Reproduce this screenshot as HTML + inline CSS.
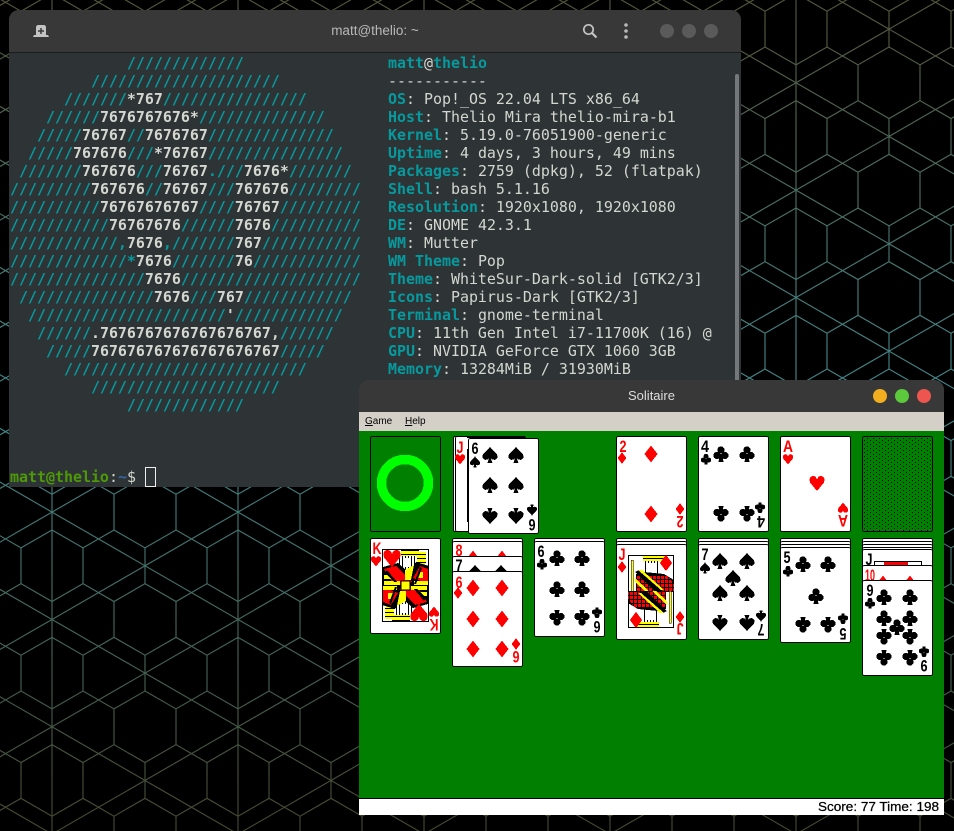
<!DOCTYPE html>
<html><head><meta charset="utf-8"><title>Desktop</title>
<style>
html,body{margin:0;padding:0;background:#000;width:954px;height:831px;overflow:hidden}
.abs{position:absolute}
#term{left:9px;top:10px;width:732px;height:477px;background:#2e3436;border-radius:10px 10px 0 0;overflow:hidden}
#thead{left:0;top:0;width:732px;height:42px;background:#383838;border-bottom:1px solid #1c1c1c}
#ttitle{left:0;top:13px;width:732px;text-align:center;font:13.5px/16px "Liberation Sans",sans-serif;color:#b8b8b8}
pre{margin:0;font-family:"DejaVu Sans Mono",monospace;font-size:14.95px;line-height:18px;color:#d3d7cf}
#logo{left:1px;top:44px;color:#069a9e;font-weight:bold}
#logo i{font-style:normal;color:#d3d7cf}
#info{left:379px;top:44px}
#info b{color:#069a9e}
#prompt{left:1px;top:458px}
#prompt b{color:#4e9a06}
#prompt em{font-style:normal;font-weight:bold;color:#3465a4}
#cursor{left:136px;top:457px;width:9px;height:18px;border:1px solid #eee}
#sb{left:726px;top:64px;width:4px;height:414px;background:#74787a;border-radius:2px}
#sol{left:359px;top:380px;width:585px;height:435px;overflow:hidden;border-radius:10px 10px 0 0;background:#383838}
#shead{left:0;top:0;width:585px;height:32px;background:#383838;color:#ddd;text-align:center;font:13px/32px "Liberation Sans",sans-serif}
#menu{left:0;top:32px;width:585px;height:19px;background:#d4d0c8;font:10px/20px "Liberation Sans",sans-serif;color:#000}
#table{left:0;top:51px;width:585px;height:367px;background:#007f00}
#status{left:0;top:418px;width:585px;height:17px;background:#fff;border-top:1px solid #000;box-sizing:border-box}
svg.full{position:absolute;left:0;top:0}
.r{font:bold 17px "Liberation Sans",sans-serif;fill:#f00;text-anchor:middle}
.k{font:bold 17px "Liberation Sans",sans-serif;fill:#000;text-anchor:middle}
</style></head><body>

<svg class="full" width="954" height="831" viewBox="0 0 954 831">
<defs>
<linearGradient id="lg" gradientUnits="userSpaceOnUse" x1="0" y1="0" x2="0" y2="831">
<stop offset="0" stop-color="#54553a"/><stop offset=".48" stop-color="#428a8e"/><stop offset="1" stop-color="#45462e"/>
</linearGradient>
<g id="tile" fill="none" stroke="#fff" stroke-width="1.150">
<path d="M0 0L31 17.89L62 0L93 17.89L124 0L155 17.89L186 0"/>
<path d="M0 71.56L31 53.67L62 71.56L93 53.67L124 71.56L155 53.67L186 71.56"/>
<path d="M31 17.89V53.67M93 17.89V53.67M155 17.89V53.67M62 71.56V107.33M124 71.56V107.33"/>
<path d="M0 0V107.33"/>
<path d="M0 89.44L31 107.33M31 0L186 89.44M0 89.44L155 0M155 107.33L186 89.44"/>
</g>
<g id="trow"><use href="#tile" x="-134"/><use href="#tile" x="52"/><use href="#tile" x="238"/><use href="#tile" x="424"/><use href="#tile" x="610"/><use href="#tile" x="796"/></g>
<mask id="hexm" maskUnits="userSpaceOnUse" x="0" y="0" width="954" height="831">
<use href="#trow" y="-114"/><use href="#trow" y="-6.67"/><use href="#trow" y="100.66"/><use href="#trow" y="208"/><use href="#trow" y="315.33"/><use href="#trow" y="422.66"/><use href="#trow" y="530"/><use href="#trow" y="637.33"/><use href="#trow" y="744.66"/>
</mask>
</defs>
<rect width="954" height="831" fill="url(#lg)" mask="url(#hexm)"/>
</svg>

<div id="term" class="abs">
<div id="thead" class="abs"></div>
<div id="ttitle" class="abs">matt@thelio: ~</div>
<svg class="abs" style="left:0;top:0" width="732" height="42" viewBox="9 10 732 42">
<path fill="#c4c4c4" d="M36 35V27.500Q36 25 38.500 25H43.500Q46 25 46 27.500V35H48L49 37H33L34 35Z"/>
<path fill="#383838" d="M40.250 28h1.500v2.250h2.250v1.500h-2.250v2.250h-1.500v-2.250h-2.250v-1.500h2.250z"/>
<circle cx="588.500" cy="29.500" r="4.700" fill="none" stroke="#c4c4c4" stroke-width="1.700"/>
<path d="M592 33L596.500 37.500" stroke="#c4c4c4" stroke-width="2.200" fill="none"/>
<circle cx="626" cy="25" r="1.800" fill="#b8b8b8"/><circle cx="626" cy="31" r="1.800" fill="#b8b8b8"/><circle cx="626" cy="37" r="1.800" fill="#b8b8b8"/>
<circle cx="667" cy="31" r="7" fill="#5a5a5a"/><circle cx="689" cy="31" r="7" fill="#5a5a5a"/><circle cx="711" cy="31" r="7" fill="#5a5a5a"/>
</svg>
<pre id="logo" class="abs">             /////////////
         /////////////////////
      ///////<i>*767</i>////////////////
    //////<i>7676767676*</i>//////////////
   /////<i>76767</i>//<i>7676767</i>//////////////
  /////<i>767676</i>///<i>*76767</i>///////////////
 ///////<i>767676</i>///<i>76767</i>.///<i>7676*</i>///////
/////////<i>767676</i>//<i>76767</i>///<i>767676</i>////////
//////////<i>76767676767</i>////<i>76767</i>/////////
///////////<i>76767676</i>//////<i>7676</i>//////////
////////////,<i>7676</i>,///////<i>767</i>///////////
/////////////*<i>7676</i>///////<i>76</i>////////////
///////////////<i>7676</i>////////////////////
 ///////////////<i>7676</i>///<i>767</i>////////////
  //////////////////////<i>'</i>////////////
   //////<i>.7676767676767676767,</i>//////
    /////<i>767676767676767676767</i>/////
      ///////////////////////////
         /////////////////////
             /////////////</pre>
<pre id="info" class="abs"><b>matt</b>@<b>thelio</b>
-----------
<b>OS</b>: Pop!_OS 22.04 LTS x86_64
<b>Host</b>: Thelio Mira thelio-mira-b1
<b>Kernel</b>: 5.19.0-76051900-generic
<b>Uptime</b>: 4 days, 3 hours, 49 mins
<b>Packages</b>: 2759 (dpkg), 52 (flatpak)
<b>Shell</b>: bash 5.1.16
<b>Resolution</b>: 1920x1080, 1920x1080
<b>DE</b>: GNOME 42.3.1
<b>WM</b>: Mutter
<b>WM Theme</b>: Pop
<b>Theme</b>: WhiteSur-Dark-solid [GTK2/3]
<b>Icons</b>: Papirus-Dark [GTK2/3]
<b>Terminal</b>: gnome-terminal
<b>CPU</b>: 11th Gen Intel i7-11700K (16) @
<b>GPU</b>: NVIDIA GeForce GTX 1060 3GB
<b>Memory</b>: 13284MiB / 31930MiB</pre>
<pre id="prompt" class="abs"><b>matt@thelio</b>:<em>~</em>$ </pre>
<div id="cursor" class="abs"></div>
<div id="sb" class="abs"></div>
</div>

<div id="sol" class="abs">
<div id="shead" class="abs">Solitaire</div>
<svg class="abs" style="left:0;top:0" width="585" height="32" viewBox="359 380 585 32">
<circle cx="880" cy="396" r="7" fill="#f2ae1e"/><circle cx="902" cy="396" r="7" fill="#5cc83b"/><circle cx="924" cy="396" r="7" fill="#ec5550"/>
</svg>
<div id="menu" class="abs"><span class="abs" style="left:6px;top:0"><u>G</u>ame</span><span class="abs" style="left:46px;top:0"><u>H</u>elp</span></div>
<div id="table" class="abs"></div>
<div id="status" class="abs"></div>
</div>

<svg class="full" width="954" height="831" viewBox="0 0 954 831" style="shape-rendering:crispEdges">
<defs>
<path id="ps" fill="#000" d="M0-8.500C2-4 8-2 7.500 2C7 5.500 3 5.500 1 3.500L2.500 8H-2.500L-1 3.500C-3 5.500-7 5.500-7.500 2C-8-2-2-4 0-8.500Z"/>
<g id="pc" fill="#000"><circle cx="0" cy="-4" r="3.600"/><circle cx="-4" cy="1.500" r="3.600"/><circle cx="4" cy="1.500" r="3.600"/><path d="M-1 0h2l1.500 8h-5z"/></g>
<path id="ph" fill="#f00" d="M0 8L-7-.5Q-8.500-6.500-4-7Q-1-7 0-3.500Q1-7 4-7Q8.500-6.500 7-.5Z"/>
<path id="pd" fill="#f00" d="M0-8.500L6.500 0L0 8.500L-6.500 0Z"/>
<g id="ips"><use href="#ps" transform="rotate(180)"/></g>
<g id="ipc"><use href="#pc" transform="rotate(180)"/></g>
<g id="ipd"><use href="#pd" transform="rotate(180)"/></g>
<g id="iph"><use href="#ph" transform="rotate(180)"/></g>
<g id="ss"><use href="#ps" transform="scale(.68)"/></g>
<g id="sc"><use href="#pc" transform="scale(.68)"/></g>
<g id="sh"><use href="#ph" transform="scale(.68)"/></g>
<g id="sd"><use href="#pd" transform="scale(.68)"/></g>
<g id="iss"><use href="#ps" transform="rotate(180) scale(.68)"/></g>
<g id="isc"><use href="#pc" transform="rotate(180) scale(.68)"/></g>
<g id="ish"><use href="#ph" transform="rotate(180) scale(.68)"/></g>
<g id="isd"><use href="#pd" transform="rotate(180) scale(.68)"/></g>
<rect id="C" x=".5" y=".5" width="70" height="95" rx="2" fill="#fff" stroke="#000"/>
<pattern id="dots" width="6" height="4" patternUnits="userSpaceOnUse"><rect width="6" height="4" fill="#007f00"/><rect width="1" height="1" fill="#000"/><rect x="3" y="2" width="1" height="1" fill="#000"/></pattern>
<pattern id="rb" width="4" height="4" patternUnits="userSpaceOnUse"><rect width="4" height="4" fill="#f00"/><rect width="1" height="4" fill="#000"/><rect y="3" width="4" height="1" fill="#000"/></pattern>
<pattern id="wb" width="3" height="2" patternUnits="userSpaceOnUse"><rect width="3" height="2" fill="#fff"/><rect width="1" height="2" fill="#000"/></pattern>
<pattern id="yb" width="2" height="4" patternUnits="userSpaceOnUse"><rect width="2" height="4" fill="#ff0"/><rect y="2" width="2" height="1" fill="#000"/></pattern>
<g id="Khalf">
<rect x="401" y="550" width="18" height="6" fill="url(#yb)"/>
<rect x="399" y="556" width="16" height="14" fill="url(#wb)"/>
<rect x="403" y="558" width="8" height="9" fill="#fff"/>
<rect x="417" y="552" width="9" height="12" fill="url(#yb)"/>
<path fill="#000" d="M383 567L398 563L408 572L416 562L429 566V586H383Z"/>
<path fill="#f00" d="M384 569L396 566L412 582L404 585H394ZM420 566L428 569V584L413 578Z"/>
<path fill="#ff0" d="M384 575h8v4h-8zM384 581h16v4h-16zM418 572h5v6h-5zM414 581h14v4h-14zM405 570L414 565L411 580H405Z"/>
<path fill="#000" d="M387 570l10 12h-3l-9-9zM422 568l-6 16h-2l6-17z"/>
<rect x="401" y="581" width="9" height="9" fill="#ff0" stroke="#000"/>
<use href="#ph" transform="translate(392 558) scale(1.150)"/>
</g>
<g id="Jhalf">
<rect x="643" y="556" width="22" height="5" fill="url(#yb)"/>
<rect x="645" y="561" width="15" height="14" fill="url(#wb)"/>
<rect x="648" y="563" width="9" height="10" fill="#fff"/>
<rect x="631" y="560" width="2" height="32" fill="#ff0" stroke="#000" stroke-width=".5"/>
<path fill="#000" d="M636 574L644 572L664 574L674 580V592H636Z"/>
<path fill="url(#rb)" d="M637 576H668L674 584V592H637Z"/>
<path fill="#000" d="M635 572L639 570L664 592H656Z"/>
<path fill="#ff0" d="M638 570L642 570L664 590H661ZM635 578L650 592H646L635 582Z"/>
<use href="#pd" transform="translate(666 563) scale(.95)"/>
</g>
</defs>

<!-- empty stock slot -->
<rect x="370.500" y="436.500" width="70" height="95" rx="2" fill="none" stroke="#000"/>
<circle cx="405" cy="483" r="23.500" fill="none" stroke="#0f0" stroke-width="9.500"/>

<!-- waste -->
<use href="#C" x="453" y="436"/>
<use href="#C" x="455" y="436"/>
<text class="r" textLength="7" lengthAdjust="spacingAndGlyphs" x="460" y="453">J</text>
<use href="#sh" x="460" y="459"/>
<rect x="467" y="449" width="2" height="73" fill="#000"/>
<rect x="468" y="452" width="1" height="18" fill="#f00"/>
<rect x="468" y="475" width="1" height="6" fill="#ff0"/>
<rect x="467" y="436" width="58" height="2" fill="#000"/>
<use href="#C" x="468" y="438"/>
<text class="k" textLength="7" lengthAdjust="spacingAndGlyphs" x="475" y="454">6</text>
<use href="#ss" x="475" y="462"/>
<use href="#ps" x="490" y="455"/><use href="#ps" x="516" y="455"/>
<use href="#ps" x="490" y="485"/><use href="#ps" x="516" y="485"/>
<use href="#ips" x="490" y="516"/><use href="#ips" x="516" y="516"/>
<use href="#iss" x="532" y="510"/>
<text class="k" textLength="7" lengthAdjust="spacingAndGlyphs" transform="rotate(180 532 525)" x="532" y="531">6</text>

<!-- 2 diamonds -->
<use href="#C" x="616" y="436"/>
<text class="r" textLength="7" lengthAdjust="spacingAndGlyphs" x="623" y="452">2</text>
<use href="#sd" x="622" y="458"/>
<use href="#pd" x="651" y="454"/><use href="#ipd" x="651" y="514"/>
<use href="#isd" x="680" y="509"/>
<text class="r" textLength="7" lengthAdjust="spacingAndGlyphs" transform="rotate(180 680 522)" x="680" y="528">2</text>

<!-- 4 clubs -->
<use href="#C" x="698" y="436"/>
<text class="k" textLength="8" lengthAdjust="spacingAndGlyphs" x="705" y="452">4</text>
<use href="#sc" x="706" y="459"/>
<use href="#pc" x="721" y="454"/><use href="#pc" x="747" y="454"/>
<use href="#ipc" x="721" y="514"/><use href="#ipc" x="747" y="514"/>
<use href="#isc" x="760" y="508"/>
<text class="k" textLength="8" lengthAdjust="spacingAndGlyphs" transform="rotate(180 761 522)" x="761" y="528">4</text>

<!-- A hearts -->
<use href="#C" x="780" y="436"/>
<text class="r" textLength="10" lengthAdjust="spacingAndGlyphs" x="788" y="452">A</text>
<use href="#sh" x="788" y="459"/>
<use href="#ph" x="817" y="483"/>
<use href="#ish" x="843" y="508"/>
<text class="r" textLength="10" lengthAdjust="spacingAndGlyphs" transform="rotate(180 843 521)" x="843" y="527">A</text>

<!-- card back -->
<rect x="862.500" y="436.500" width="70" height="95" rx="2" fill="url(#dots)" stroke="#000"/>

<!-- K hearts -->
<use href="#C" x="370" y="538"/>
<rect x="382.500" y="549.500" width="46" height="72" fill="#fff" stroke="#000"/>
<use href="#Khalf"/>
<use href="#Khalf" transform="rotate(180 405.500 585.500)"/>
<text class="r" textLength="9" lengthAdjust="spacingAndGlyphs" x="377" y="554">K</text>
<use href="#sh" x="376" y="561"/>
<use href="#ish" x="434" y="612"/>
<text class="r" textLength="9" lengthAdjust="spacingAndGlyphs" transform="rotate(180 434 625)" x="434" y="631">K</text>

<!-- column 2 -->
<use href="#C" x="452" y="538"/>
<use href="#C" x="452" y="541"/>
<text class="r" textLength="7" lengthAdjust="spacingAndGlyphs" x="459" y="556">8</text>
<use href="#pd" x="473" y="559"/><use href="#pd" x="502" y="559"/>
<use href="#C" x="452" y="556"/>
<text class="k" textLength="7" lengthAdjust="spacingAndGlyphs" x="459" y="571">7</text>
<use href="#ps" x="475" y="573"/><use href="#ps" x="501" y="573"/>
<use href="#C" x="452" y="571"/>
<text class="r" textLength="7" lengthAdjust="spacingAndGlyphs" x="459" y="588">6</text>
<use href="#sd" x="458" y="593"/>
<use href="#pd" x="473" y="588"/><use href="#pd" x="502" y="588"/>
<use href="#pd" x="473" y="619"/><use href="#pd" x="502" y="619"/>
<use href="#ipd" x="473" y="649"/><use href="#ipd" x="502" y="649"/>
<use href="#isd" x="516" y="644"/>
<text class="r" textLength="7" lengthAdjust="spacingAndGlyphs" transform="rotate(180 516 657)" x="516" y="663">6</text>

<!-- column 3 -->
<use href="#C" x="534" y="538"/>
<use href="#C" x="534" y="541"/>
<text class="k" textLength="7" lengthAdjust="spacingAndGlyphs" x="541" y="557">6</text>
<use href="#sc" x="542" y="564"/>
<use href="#pc" x="557" y="558"/><use href="#pc" x="582" y="558"/>
<use href="#pc" x="557" y="589"/><use href="#pc" x="582" y="589"/>
<use href="#ipc" x="557" y="618"/><use href="#ipc" x="582" y="618"/>
<use href="#isc" x="597" y="613"/>
<text class="k" textLength="7" lengthAdjust="spacingAndGlyphs" transform="rotate(180 597 627)" x="597" y="633">6</text>

<!-- J diamonds -->
<use href="#C" x="616" y="538"/>
<use href="#C" x="616" y="541"/>
<use href="#C" x="616" y="544"/>
<rect x="628.500" y="555.500" width="45" height="72" fill="#fff" stroke="#000"/>
<use href="#Jhalf"/>
<use href="#Jhalf" transform="rotate(180 651 591.500)"/>
<text class="r" textLength="7" lengthAdjust="spacingAndGlyphs" x="622" y="560">J</text>
<use href="#sd" x="622" y="567"/>
<use href="#isd" x="680" y="617"/>
<text class="r" textLength="7" lengthAdjust="spacingAndGlyphs" transform="rotate(180 680 629)" x="680" y="635">J</text>

<!-- 7 spades -->
<use href="#C" x="698" y="538"/>
<use href="#C" x="698" y="541"/>
<use href="#C" x="698" y="544"/>
<text class="k" textLength="7" lengthAdjust="spacingAndGlyphs" x="705" y="560">7</text>
<use href="#ss" x="705" y="568"/>
<use href="#ps" x="720" y="561"/><use href="#ps" x="747" y="561"/>
<use href="#ps" x="733" y="578"/>
<use href="#ps" x="720" y="593"/><use href="#ps" x="747" y="593"/>
<use href="#ips" x="720" y="623"/><use href="#ips" x="747" y="623"/>
<use href="#iss" x="761" y="616"/>
<text class="k" textLength="7" lengthAdjust="spacingAndGlyphs" transform="rotate(180 761 630)" x="761" y="636">7</text>

<!-- 5 clubs -->
<use href="#C" x="780" y="538"/>
<use href="#C" x="780" y="541"/>
<use href="#C" x="780" y="544"/>
<use href="#C" x="780" y="547"/>
<text class="k" textLength="7" lengthAdjust="spacingAndGlyphs" x="787" y="563">5</text>
<use href="#sc" x="788" y="571"/>
<use href="#pc" x="803" y="564"/><use href="#pc" x="828" y="564"/>
<use href="#pc" x="816" y="596"/>
<use href="#ipc" x="803" y="625"/><use href="#ipc" x="828" y="625"/>
<use href="#isc" x="843" y="619"/>
<text class="k" textLength="7" lengthAdjust="spacingAndGlyphs" transform="rotate(180 843 634)" x="843" y="640">5</text>

<!-- column 7 -->
<use href="#C" x="862" y="538"/>
<use href="#C" x="862" y="541"/>
<use href="#C" x="862" y="544"/>
<use href="#C" x="862" y="547"/>
<use href="#C" x="862" y="549"/>
<text class="k" textLength="7" lengthAdjust="spacingAndGlyphs" x="869" y="565">J</text>
<rect x="874.500" y="561.500" width="47" height="30" fill="#fff" stroke="#000"/>
<rect x="884" y="562" width="24" height="3" fill="#f00"/>
<use href="#C" x="862" y="565"/>
<text class="r" textLength="10" lengthAdjust="spacingAndGlyphs" x="870" y="581">10</text>
<use href="#pd" x="883" y="584"/><use href="#pd" x="910" y="584"/>
<use href="#C" x="862" y="580"/>
<text class="k" textLength="7" lengthAdjust="spacingAndGlyphs" x="870" y="596">9</text>
<use href="#sc" x="870" y="603"/>
<use href="#pc" x="884" y="597"/><use href="#pc" x="910" y="597"/>
<use href="#pc" x="884" y="618"/><use href="#pc" x="910" y="618"/>
<use href="#pc" x="897" y="627"/>
<use href="#ipc" x="884" y="637"/><use href="#ipc" x="910" y="637"/>
<use href="#ipc" x="884" y="658"/><use href="#ipc" x="910" y="658"/>
<use href="#isc" x="924" y="652"/>
<text class="k" textLength="7" lengthAdjust="spacingAndGlyphs" transform="rotate(180 924 666)" x="924" y="672">9</text>

<text x="818" y="811" textLength="121" lengthAdjust="spacingAndGlyphs" stroke="#000" stroke-width=".25" style="font:13px 'Liberation Sans',sans-serif;fill:#000">Score: 77 Time: 198</text>
</svg>
</body></html>
